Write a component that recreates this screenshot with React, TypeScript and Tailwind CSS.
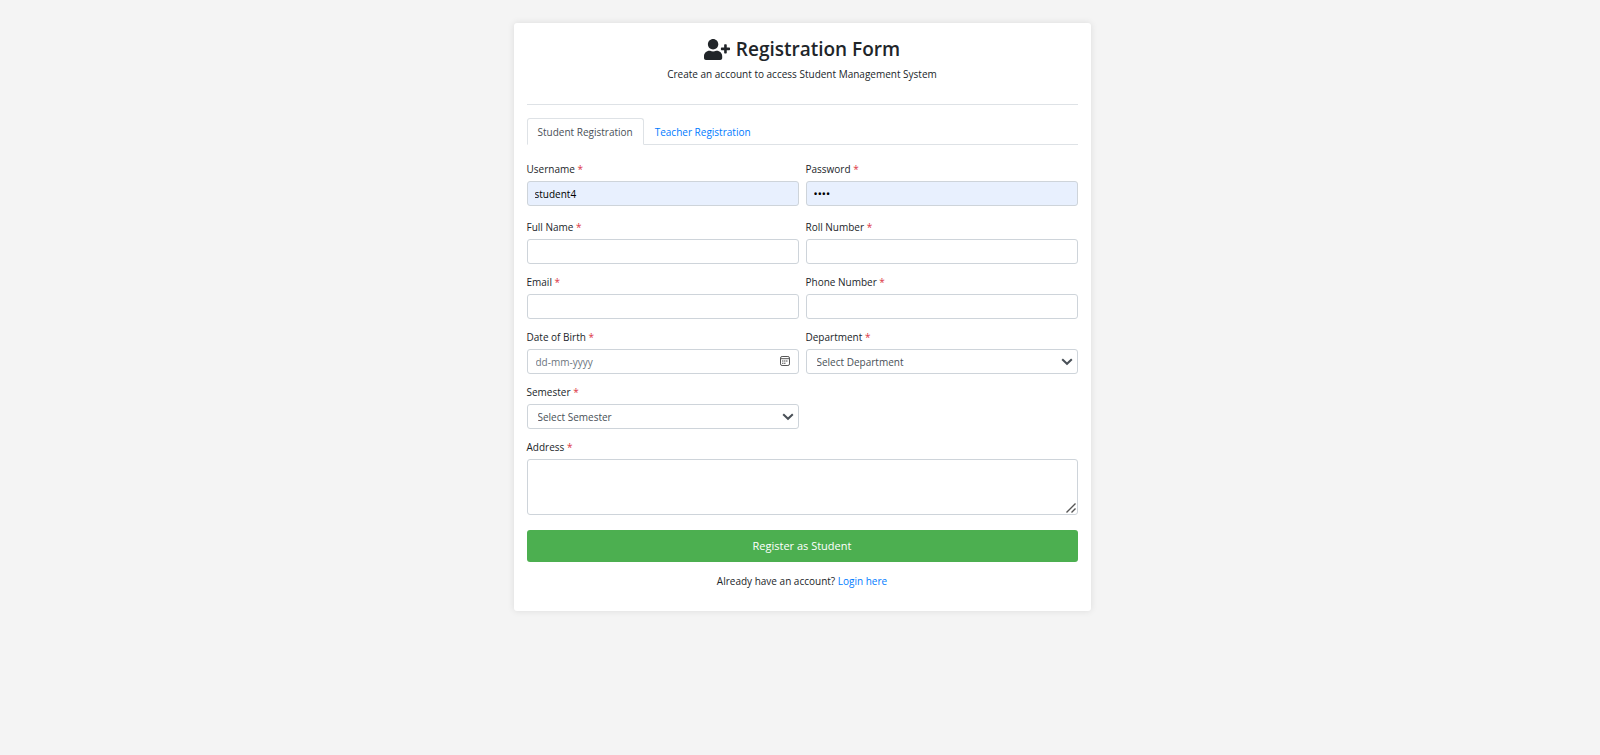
import { useId, useState } from 'react';
import type { InputHTMLAttributes, ReactNode } from 'react';
import { FaUserPlus } from 'react-icons/fa';

const controlClass =
  'block h-[25px] w-full rounded-[3px] border border-[#ced4da] px-[7px] text-black outline-none focus:border-[#80bdff]';

function Field({ label, id, children }: { label: string; id: string; children: ReactNode }) {
  return (
    <div className="flex min-w-0 flex-col gap-1">
      <label htmlFor={id} className="leading-4">
        {label} <span className="text-[#dc3545]">*</span>
      </label>
      {children}
    </div>
  );
}

function TextField({
  label,
  filled = false,
  ...props
}: { label: string; filled?: boolean } & InputHTMLAttributes<HTMLInputElement>) {
  const id = useId();
  return (
    <Field label={label} id={id}>
      <input
        id={id}
        {...props}
        className={`${controlClass} ${props.type === 'password' ? "font-['Noto_Sans',sans-serif] text-[11px]" : 'text-[10px]'} ${
          filled ? 'bg-[#e8f0fe]' : 'bg-white'
        }`}
      />
    </Field>
  );
}

function SelectField({ label, options }: { label: string; options: string[] }) {
  const id = useId();
  return (
    <Field label={label} id={id}>
      <div className="relative">
        <select
          id={id}
          className="block h-[25px] w-full appearance-none rounded-[3px] border border-[#ced4da] bg-white pr-6 pl-[10px] text-[10px] text-[#495057] outline-none"
        >
          {options.map((option) => (
            <option key={option}>{option}</option>
          ))}
        </select>
        <svg
          viewBox="0 0 12 8"
          className="pointer-events-none absolute top-[9px] right-[5px] h-2 w-3 fill-none stroke-[#495057] stroke-2"
        >
          <path d="M1.2 1.2 6 5.8l4.8-4.6" />
        </svg>
      </div>
    </Field>
  );
}

function DateField({ label }: { label: string }) {
  const id = useId();
  return (
    <Field label={label} id={id}>
      <div className="relative">
        <input
          id={id}
          type="text"
          placeholder="dd-mm-yyyy"
          className="block h-[25px] w-full rounded-[3px] border border-[#ced4da] bg-white pr-7 pl-2 text-[10px] text-[#495057] outline-none placeholder:text-[#6c757d]"
        />
        <button type="button" aria-label="Open calendar" className="absolute top-[7px] right-[9px]">
          <svg viewBox="0 0 10 10" className="block size-[10px] fill-none stroke-[#555]">
            <rect x="0.5" y="0.5" width="9" height="9" rx="1.6" />
            <path d="M0.5 2.7h9" />
            <path d="M2 5h6M2 7.2h3.8" strokeDasharray="1.5 0.5" strokeWidth="1.1" />
          </svg>
        </button>
      </div>
    </Field>
  );
}

export default function App() {
  const [role, setRole] = useState<'Student' | 'Teacher'>('Student');
  const addressId = useId();

  return (
    <div className="min-h-screen bg-[#f4f4f4] pt-[23px] pr-4 pb-10 pl-5 font-['Open_Sans','Noto_Sans',sans-serif] text-[10px] leading-4 text-[#212529]">
      <main className="mx-auto max-w-[577px] rounded-[3px] bg-white px-[13px] pt-[13px] pb-[22px] shadow-[0_0_7px_rgba(0,0,0,0.1)]">
        <header className="border-b border-[#dee2e6] pb-[22px] text-center">
          <h1 className="flex items-center justify-center gap-[6px] text-[19px] leading-[26px] font-semibold">
            <FaUserPlus className="h-[21px] w-[26px]" />
            Registration Form
          </h1>
          <p className="mt-1">Create an account to access Student Management System</p>
        </header>

        <div role="tablist" className="mt-[13px] flex border-b border-[#dee2e6]">
          {(['Student', 'Teacher'] as const).map((name) => (
            <button
              key={name}
              type="button"
              role="tab"
              aria-selected={role === name}
              onClick={() => setRole(name)}
              className={`-mb-px h-[27px] rounded-t-[3px] border px-[10px] ${
                role === name
                  ? 'border-[#dee2e6] border-b-white bg-white text-[#495057]'
                  : 'border-transparent text-[#007bff]'
              }`}
            >
              {name} Registration
            </button>
          ))}
        </div>

        <form onSubmit={(event) => event.preventDefault()} className="mt-4">
          <div className="mb-[13px] grid grid-cols-2 gap-x-[7px]">
            <TextField label="Username" type="text" defaultValue="student4" filled />
            <TextField label="Password" type="password" defaultValue="1234" filled />
          </div>
          <div className="grid grid-cols-2 gap-x-[7px] gap-y-[10px]">
            <TextField label="Full Name" type="text" />
            <TextField label="Roll Number" type="text" />
            <TextField label="Email" type="email" />
            <TextField label="Phone Number" type="tel" />
            <DateField label="Date of Birth" />
            <SelectField label="Department" options={['Select Department']} />
            <SelectField label="Semester" options={['Select Semester']} />
            <div className="col-span-2">
              <Field label="Address" id={addressId}>
                <div className="relative">
                  <textarea
                    id={addressId}
                    className="block h-14 w-full resize-y rounded-[3px] border border-[#ced4da] bg-white px-[7px] py-1 text-[10px] outline-none [&::-webkit-resizer]:hidden"
                  />
                  <svg
                    viewBox="0 0 10 10"
                    className="pointer-events-none absolute right-[2px] bottom-[2px] size-[10px] fill-none stroke-[#555] stroke-[1.4]"
                  >
                    <path d="M0.5 9.5l9-9M5.5 9.5l4-4" />
                  </svg>
                </div>
              </Field>
            </div>
          </div>
          <button type="submit" className="mt-[15px] h-8 w-full rounded-[3px] bg-[#4caf50] text-[11px] text-white">
            Register as {role}
          </button>
        </form>

        <p className="mt-[11px] text-center">
          Already have an account?{' '}
          <a href="#login" className="text-[#007bff]">
            Login here
          </a>
        </p>
      </main>
    </div>
  );
}
